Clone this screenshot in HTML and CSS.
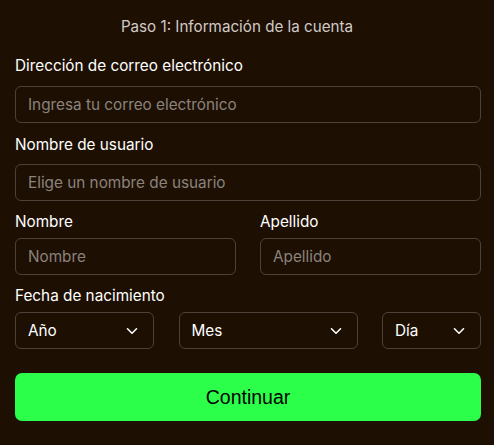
FILE: index.html
```html
<!DOCTYPE html>
<html lang="es">
<head>
<meta charset="utf-8">
<link rel="stylesheet" href="styles.css">
</head>
<body>
<form class="form">
  <h2 class="title">Paso 1: Información de la cuenta</h2>
  <div class="field field-wide">
    <label class="label">Dirección de correo electrónico</label>
    <input class="input" type="email" placeholder="Ingresa tu correo electrónico">
  </div>
  <div class="field field-wide">
    <label class="label">Nombre de usuario</label>
    <input class="input" type="text" placeholder="Elige un nombre de usuario">
  </div>
  <div class="row">
    <div class="field">
      <label class="label">Nombre</label>
      <input class="input" type="text" placeholder="Nombre">
    </div>
    <div class="field">
      <label class="label">Apellido</label>
      <input class="input" type="text" placeholder="Apellido">
    </div>
  </div>
  <div class="field">
    <label class="label">Fecha de nacimiento</label>
    <div class="dates">
      <div class="select"><span>Año</span><svg class="chev" viewBox="0 0 12 8"><path d="M1.5 1.8 L6 6.2 L10.5 1.8"/></svg></div>
      <div class="select"><span>Mes</span><svg class="chev" viewBox="0 0 12 8"><path d="M1.5 1.8 L6 6.2 L10.5 1.8"/></svg></div>
      <div class="select"><span>Día</span><svg class="chev" viewBox="0 0 12 8"><path d="M1.5 1.8 L6 6.2 L10.5 1.8"/></svg></div>
    </div>
  </div>
  <button class="button" type="button">Continuar</button>
</form>
</body>
</html>
```
FILE: styles.css
```css
html, body {
  margin: 0;
  padding: 0;
  background: #1e0f03;
}
body {
  font-family: Inter, "Noto Sans", sans-serif;
  color: #ffffff;
  width: 494px;
  height: 445px;
  overflow: hidden;
}
.form {
  display: flex;
  flex-direction: column;
  padding: 17px 13px 0 15px;
}
.title {
  margin: 0 0 19px 0;
  font-size: 15.2px;
  line-height: 20px;
  font-weight: 400;
  color: #cfcac6;
  text-align: center;
  padding-right: 22px;
}
.field {
  display: flex;
  flex-direction: column;
  margin-bottom: 11px;
}
.field-wide {
  margin-bottom: 12px;
}
.field-wide .label {
  margin-bottom: 10px;
}
.field-wide + .field-wide {
  margin-bottom: 11px;
}
.field-wide + .field-wide .label {
  margin-bottom: 9px;
}
.label {
  font-size: 15.3px;
  line-height: 20px;
  margin-bottom: 6px;
  color: #ffffff;
}
.input {
  box-sizing: border-box;
  height: 37px;
  width: 100%;
  margin: 0;
  padding: 0 12px;
  background: transparent;
  border: 1px solid #4c423a;
  border-radius: 6px;
  font-family: Inter, "Noto Sans", sans-serif;
  font-size: 15.3px;
  color: #ffffff;
  outline: none;
}
.input::placeholder {
  color: #8a837d;
}
.row {
  display: grid;
  grid-template-columns: 1fr 1fr;
  column-gap: 24px;
}
.dates {
  display: flex;
  justify-content: space-between;
}
.select {
  box-sizing: border-box;
  height: 37px;
  display: flex;
  align-items: center;
  justify-content: space-between;
  padding: 0 15px 0 12px;
  border: 1px solid #4c423a;
  border-radius: 6px;
  font-size: 15.3px;
  color: #ffffff;
}
.select:nth-child(1) { width: 139px; }
.select:nth-child(2) { width: 179px; }
.select:nth-child(3) { width: 99px; }
.chev {
  width: 12px;
  height: 8px;
  fill: none;
  stroke: #ffffff;
  stroke-width: 1.6;
  stroke-linecap: round;
  stroke-linejoin: round;
}
.button {
  margin-top: 13px;
  height: 48px;
  width: 100%;
  border: none;
  border-radius: 7px;
  background: #2bff4a;
  color: #000000;
  font-family: "Liberation Sans", Arial, sans-serif;
  font-size: 19.5px;
  cursor: pointer;
}
```
